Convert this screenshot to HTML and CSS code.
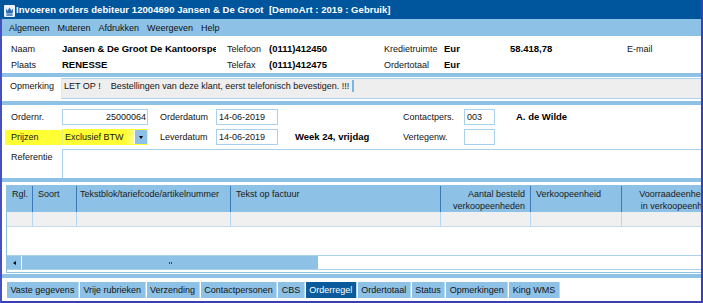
FILE: index.html
```html
<!DOCTYPE html>
<html>
<head>
<meta charset="utf-8">
<link rel="stylesheet" href="styles.css">
</head>
<body>
<div class="win">
  <div class="titlebar">
    <svg class="appicon" width="11" height="12" viewBox="0 0 11 12">
      <rect x="0" y="0" width="11" height="12" rx="1" fill="#e9f1fb"/>
      <path d="M1.8 3.6 L3.6 5.8 L5.5 2.6 L7.4 5.8 L9.2 3.6 L8.6 8.6 L2.4 8.6 Z" fill="#2a66b4"/>
      <rect x="2.4" y="9.3" width="6.2" height="1.4" fill="#2a66b4"/>
    </svg>
    <span class="title">Invoeren orders debiteur 12004690 Jansen &amp; De Groot&nbsp; [DemoArt : 2019 : Gebruik]</span>
  </div>
  <div class="frame">
    <nav class="menubar">
      <span>Algemeen</span><span>Muteren</span><span>Afdrukken</span><span>Weergeven</span><span>Help</span>
    </nav>

    <section class="hdr">
      <div class="hrow">
        <span class="h1">Naam</span>
        <span class="h2 b">Jansen &amp; De Groot De Kantoorspecialist</span>
        <span class="h3">Telefoon</span>
        <span class="h4 b">(0111)412450</span>
        <span class="h5">Kredietruimte</span>
        <span class="h6 b">Eur</span>
        <span class="h7 b">58.418,78</span>
        <span class="h8">E-mail</span>
      </div>
      <div class="hrow">
        <span class="h1">Plaats</span>
        <span class="h2 b">RENESSE</span>
        <span class="h3">Telefax</span>
        <span class="h4 b">(0111)412475</span>
        <span class="h5">Ordertotaal</span>
        <span class="h6 b">Eur</span>
      </div>
    </section>

    <div class="band band-top"></div>

    <section class="opm">
      <span class="opm-lbl">Opmerking</span>
      <div class="memo"><span class="memo-text">LET OP !    Bestellingen van deze klant, eerst telefonisch bevestigen. !!!</span><span class="caret"></span></div>
    </section>

    <div class="band band-mid"></div>

    <section class="order">
      <div class="orow">
        <span class="ol">Ordernr.</span>
        <span class="inp inp-wide num">25000064</span>
        <span class="ol2">Orderdatum</span>
        <span class="inp inp-date">14-06-2019</span>
        <span class="mid"></span>
        <span class="ol3">Contactpers.</span>
        <span class="inp inp-small">003</span>
        <span class="b cname">A. de Wilde</span>
      </div>
      <div class="orow">
        <span class="ol hl">Prijzen</span>
        <span class="sel">
          <span class="sel-text">Exclusief BTW</span>
          <span class="sel-btn"><span class="tri-down"></span></span>
        </span>
        <span class="ol2">Leverdatum</span>
        <span class="inp inp-date">14-06-2019</span>
        <span class="mid b week">Week 24, vrijdag</span>
        <span class="ol3">Vertegenw.</span>
        <span class="inp inp-small"></span>
      </div>
      <div class="orow orow-ref">
        <span class="ol ref-lbl">Referentie</span>
        <span class="refbox"></span>
      </div>
    </section>

    <div class="band band-low"></div>

    <section class="grid">
      <div class="gcols ghead">
        <div class="gh">Rgl.</div>
        <div class="gh">Soort</div>
        <div class="gh">Tekstblok/tariefcode/artikelnummer</div>
        <div class="gh">Tekst op factuur</div>
        <div class="gh right">Aantal besteld<br>verkoopeenheden</div>
        <div class="gh">Verkoopeenheid</div>
        <div class="gh center">Voorraadeenheden<br>in verkoopeenheid</div>
      </div>
      <div class="gcols grow">
        <div class="gc"></div><div class="gc"></div><div class="gc"></div><div class="gc"></div><div class="gc"></div><div class="gc"></div><div class="gc"></div>
      </div>
      <div class="gempty"></div>
      <div class="hscroll">
        <span class="sb-arrow"><span class="tri-left"></span></span>
        <span class="sb-thumb"><span class="grip"></span></span>
      </div>
    </section>

    <div class="band band-bottom"></div>

    <nav class="tabs">
      <span class="tab">Vaste gegevens</span>
      <span class="tab">Vrije rubrieken</span>
      <span class="tab">Verzending</span>
      <span class="tab">Contactpersonen</span>
      <span class="tab">CBS</span>
      <span class="tab active">Orderregel</span>
      <span class="tab">Ordertotaal</span>
      <span class="tab">Status</span>
      <span class="tab">Opmerkingen</span>
      <span class="tab">King WMS</span>
    </nav>
  </div>
</div>
</body>
</html>
```

FILE: styles.css
```css
* { box-sizing: border-box; }

html, body {
  margin: 0;
  padding: 0;
  background: #ffffff;
}

body {
  font-family: "Liberation Sans", Arial, sans-serif;
  font-size: 9px;
  color: #141414;
  line-height: 12px;
}

.b { font-weight: bold; font-size: 9.5px; color: #000; }

.win {
  width: 703px;
  height: 303px;
  overflow: hidden;
  display: flex;
  flex-direction: column;
}

/* title bar */
.titlebar {
  height: 19px;
  flex: none;
  background: #00569c;
  color: #fff;
  display: flex;
  align-items: center;
  padding-left: 4px;
  gap: 1px;
  border-right: 2px solid #3a3fb5;
}
.appicon { flex: none; margin-top: 2px; }
.title {
  font-weight: bold;
  font-size: 9.5px;
  white-space: nowrap;
  letter-spacing: 0.05px;
}

/* frame with window borders */
.frame {
  flex: 1;
  display: flex;
  flex-direction: column;
  border-left: 2px solid #4650c0;
  border-right: 2px solid #3a3fb5;
  border-bottom: 2px solid #3a3fb5;
  overflow: hidden;
  min-height: 0;
}

.menubar {
  height: 17px;
  flex: none;
  background: #8dc1e5;
  display: flex;
  align-items: center;
  padding-left: 7px;
  gap: 8px;
  color: #111;
}

/* header */
.hdr {
  height: 37px;
  flex: none;
  padding-top: 5px;
}
.hrow {
  display: flex;
  height: 15px;
  align-items: center;
  white-space: nowrap;
}
.hrow + .hrow { margin-top: 1px; }
.h1 { width: 60px; padding-left: 9px; flex: none; }
.h2 { width: 154px; margin-right: 11px; overflow: hidden; flex: none; text-overflow: clip; }
.h3 { width: 42px; flex: none; }
.h4 { width: 115px; flex: none; }
.h5 { width: 60px; flex: none; }
.h6 { width: 66px; flex: none; }
.h7 { width: 117px; flex: none; }
.h8 { flex: none; }

.band {
  height: 4px;
  flex: none;
  background: #8dc1e5;
}
.band-top { margin-bottom: 1px; }
.band-mid { margin-top: 2px; }
.band-bottom { margin-top: 1px; margin-bottom: 4px; }

/* opmerking */
.opm {
  height: 21px;
  flex: none;
  display: flex;
}
.opm-lbl {
  width: 59px;
  flex: none;
  padding-left: 8px;
  padding-top: 2px;
}
.memo {
  flex: 1;
  background: #eeeeee;
  border-top: 1px solid #a9d0ec;
  border-bottom: 1px solid #a9d0ec;
  border-left: 1px solid #d9e9f5;
  padding: 1px 0 0 2px;
  display: flex;
  align-items: flex-start;
  white-space: pre;
}
.caret {
  width: 2px;
  height: 12px;
  background: #7db4e0;
  margin-left: 3px;
}

/* order fields */
.order {
  height: 73px;
  flex: none;
  padding-top: 4px;
  display: flex;
  flex-direction: column;
  gap: 4px;
}
.orow {
  display: flex;
  height: 16px;
  align-items: center;
  white-space: nowrap;
  flex: none;
}
.ol { width: 60px; padding-left: 9px; flex: none; height: 16px; line-height: 16px; }
.ol2 { width: 56px; margin-left: 12px; flex: none; }
.ol3 { width: 61px; flex: none; }
.mid { width: 125px; flex: none; }
.week { padding-left: 17px; }
.cname { margin-left: 21px; }

.inp {
  height: 16px;
  border: 1px solid #a9d0ec;
  background: #fff;
  padding: 0 2px;
  line-height: 14px;
  flex: none;
}
.inp-wide { width: 86px; }
.inp-date { width: 62px; }
.inp-small { width: 31px; }
.num { text-align: right; padding-right: 1px; }

.hl {
  background: linear-gradient(#ffff33, #ffff33) 3px 1px / calc(100% - 3px) 15px no-repeat;
}

.sel {
  width: 86px;
  height: 16px;
  display: flex;
  flex: none;
  border: 1px solid #ffff33;
  border-left-color: #e8f07a;
  background: #fff;
}
.sel-text {
  flex: 1;
  background: linear-gradient(100deg, #ffff33 0%, #ffff33 86%, #fffb90 100%);
  padding-left: 2px;
  line-height: 14px;
}
.sel-btn {
  width: 12px;
  flex: none;
  background: #8dc1e5;
  display: flex;
  align-items: center;
  justify-content: center;
  margin-left: 1px;
}
.tri-down {
  width: 0; height: 0;
  border-left: 2.5px solid transparent;
  border-right: 2.5px solid transparent;
  border-top: 3px solid #000;
}

.orow-ref { height: 29px; align-items: stretch; }
.ref-lbl { height: auto; line-height: 12px; padding-top: 2px; }
.refbox {
  flex: 1;
  border-top: 1px solid #a9d0ec;
  border-left: 1px solid #a9d0ec;
  background: #fff;
}

/* grid */
.grid {
  flex: none;
  height: 88px;
  margin-top: 3px;
  margin-left: 4px;
  width: 720px;
  border: 1px solid #8dc1e5;
  border-right: none;
  display: flex;
  flex-direction: column;
}
.gcols {
  display: grid;
  grid-template-columns: 26px 44px 154px 210px 90px 91px 100px;
}
.ghead {
  height: 26px;
  background: #8dc1e5;
}
.gh {
  border-right: 1px solid #3b7bb5;
  padding: 2px 5px 0 5px;
  white-space: nowrap;
  overflow: hidden;
  color: #1a1a1a;
}
.gh:nth-child(3) { padding-left: 3px; }
.gh.right { text-align: right; }
.gh.center { text-align: center; padding-left: 12px; padding-right: 0; }
.grow {
  height: 15px;
  background: #f0f0f0;
  border-bottom: 1px solid #c2dcef;
}
.gc { border-right: 1px solid #b4d6ee; }
.gempty { height: 28px; background: #fff; }
.hscroll {
  height: 15px;
  display: flex;
  align-items: center;
  border-top: 1px solid #a9d0ec;
  border-bottom: 1px solid #a9d0ec;
  background: #fff;
}
.sb-arrow {
  width: 14px;
  height: 13px;
  background: #8dc1e5;
  display: flex;
  align-items: center;
  justify-content: center;
}
.tri-left {
  width: 0; height: 0;
  border-top: 2.5px solid transparent;
  border-bottom: 2.5px solid transparent;
  border-right: 3px solid #000;
}
.sb-thumb {
  width: 296px;
  height: 13px;
  margin-left: 1px;
  background: #8dc1e5;
  display: flex;
  align-items: center;
  justify-content: center;
}
.grip {
  width: 3px;
  height: 2px;
  border-left: 1px solid #444;
  border-right: 1px solid #444;
}

/* tabs */
.tabs {
  height: 16px;
  flex: none;
  display: flex;
  gap: 1px;
  padding-left: 5px;
}
.tab {
  background: #8dc1e5;
  padding: 0 3.5px;
  line-height: 16px;
  white-space: nowrap;
  color: #141414;
  border-right: 1px solid #b9daf0;
}
.tab.active {
  background: #0b5a9c;
  color: #fff;
}
```
